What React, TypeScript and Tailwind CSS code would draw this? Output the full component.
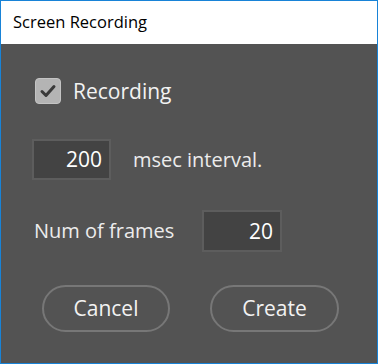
import { useState } from "react";

function NumBox({ value, className }: { value: string; className?: string }) {
  return (
    <div
      className={
        "flex items-center justify-end border-2 border-[#5d5d5d] bg-[#434343] pr-[7px] text-[21px] leading-none text-white " +
        (className ?? "")
      }
    >
      {value}
    </div>
  );
}

export default function App() {
  const [recording, setRecording] = useState(true);

  return (
    <div
      className="flex h-[364px] w-[378px] flex-col border border-[#1883d7] bg-[#535353]"
      style={{ fontFamily: '"Open Sans", "Noto Sans", sans-serif' }}
    >
      {/* title bar */}
      <div className="flex h-[43px] items-center bg-white pl-[12px] text-[16.5px] text-black">
        Screen Recording
      </div>

      <div className="flex flex-1 flex-col pl-[31px] text-[#ececec]">
        <button
          className="mt-[34px] flex h-[26px] items-center gap-[12px] pl-[3px] text-left leading-none"
          onClick={() => setRecording(!recording)}
        >
          <span className="flex h-[26px] w-[26px] items-center justify-center rounded-[4px] border border-[#c4c4c4] bg-[#b4b4b4]">
            {recording && (
              <svg width="18" height="18" viewBox="0 0 18 18">
                <path d="M3 9.5 L7 13.5 L15 4.5" fill="none" stroke="#3a3a3a" strokeWidth="3" strokeLinecap="round" strokeLinejoin="round" />
              </svg>
            )}
          </span>
          <span className="text-[21px] text-[#f2f2f2]">Recording</span>
        </button>

        <div className="mt-[35px] flex items-center gap-[22px]">
          <NumBox value="200" className="h-[41px] w-[79px]" />
          <span className="text-[20px] leading-none">msec interval.</span>
        </div>

        <div className="mt-[30px] flex items-center">
          <span className="ml-[2px] w-[168px] text-[20px] leading-none">Num of frames</span>
          <NumBox value="20" className="h-[42px] w-[80px]" />
        </div>

        <div className="mt-[33px] flex gap-[40px] pl-[10px]">
          <button className="h-[47px] w-[128px] rounded-full border-2 border-[#777777] text-[21px] leading-none text-[#f2f2f2]">
            Cancel
          </button>
          <button className="h-[47px] w-[129px] rounded-full border-2 border-[#777777] text-[21px] leading-none text-[#f2f2f2]">
            Create
          </button>
        </div>
      </div>
    </div>
  );
}
